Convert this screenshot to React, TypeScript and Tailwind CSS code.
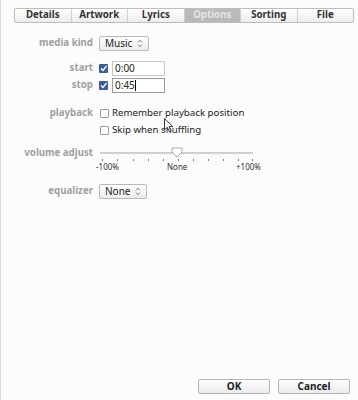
import React from "react";

const tabs = ["Details", "Artwork", "Lyrics", "Options", "Sorting", "File"];

function Label({ children }: { children: React.ReactNode }) {
  return (
    <div className="w-[98px] shrink-0 pr-[6px] text-right font-bold text-[9.7px] text-[#a0a0a0]">
      {children}
    </div>
  );
}

function Check({ checked }: { checked?: boolean }) {
  if (checked) {
    return (
      <div className="w-[9px] h-[9px] bg-[#3b5c9c] rounded-[1px] flex items-center justify-center">
        <svg width="7" height="7" viewBox="0 0 7 7">
          <path d="M1 3.5 L3 5.5 L6.5 1" stroke="white" strokeWidth="1.4" fill="none" />
        </svg>
      </div>
    );
  }
  return <div className="w-[9px] h-[9px] border border-[#9c9c9c] bg-white rounded-[1px]" />;
}

function Popup({ value, w }: { value: string; w: string }) {
  return (
    <div
      className={`${w} h-[15px] border border-[#b8b8b8] rounded-[2px] bg-gradient-to-b from-white to-[#ececec] flex items-center justify-between pl-[5px] pr-[5px] text-[10px] text-[#222]`}
    >
      <span>{value}</span>
      <svg width="6" height="9" viewBox="0 0 6 9">
        <path d="M1 3.5 L3 1.2 L5 3.5 M1 5.5 L3 7.8 L5 5.5" stroke="#777" strokeWidth="0.9" fill="none" />
      </svg>
    </div>
  );
}

export default function App() {
  const ticks = [102, 117, 133, 148, 163, 178, 193, 208, 223, 238, 252];
  return (
    <div
      className="relative w-[358px] h-[400px] bg-[#fcfcfc] border-l border-[#d8d8d8] overflow-hidden"
      style={{ fontFamily: '"Noto Sans", "DejaVu Sans", sans-serif' }}
    >
      <div className="ml-[13px] mt-[8px] w-[340px] h-[15px] flex border border-[#bdbdbd] rounded-[2px] bg-gradient-to-b from-white to-[#ececec]">
        {tabs.map((t, i) => (
          <div
            key={t}
            className={`flex-1 flex items-center justify-center text-[9.7px] font-bold ${
              i > 0 ? "border-l border-[#cfcfcf]" : ""
            } ${t === "Options" ? "bg-[#b9b9b9] text-[#e4e4e4]" : "text-[#333]"}`}
          >
            {t}
          </div>
        ))}
      </div>

      <div className="flex flex-col">
        <div className="mt-[13px] h-[15px] flex items-center">
          <Label>media kind</Label>
          <Popup value="Music" w="w-[50px]" />
        </div>

        <div className="mt-[10px] h-[15px] flex items-center">
          <Label>start</Label>
          <Check checked />
          <div className="ml-[4px] w-[53px] h-[15px] border border-[#c8c8c8] bg-white text-[10px] text-[#222] pl-[2px] leading-[13px]">
            0:00
          </div>
        </div>
        <div className="mt-[2px] h-[15px] flex items-center">
          <Label>stop</Label>
          <Check checked />
          <div className="ml-[4px] w-[53px] h-[15px] border border-[#9a9a9a] bg-white text-[10px] text-[#222] pl-[2px] leading-[13px] flex items-center">
            0:45<span className="w-px h-[11px] bg-black" />
          </div>
        </div>

        <div className="mt-[13px] h-[15px] flex items-center">
          <Label>playback</Label>
          <div className="ml-px">
            <Check />
          </div>
          <span className="ml-[3px] text-[9.7px] text-[#222]">Remember playback position</span>
        </div>
        <div className="mt-[2px] h-[15px] flex items-center">
          <div className="w-[98px]" />
          <div className="ml-px">
            <Check />
          </div>
          <span className="ml-[3px] text-[9.7px] text-[#222]">Skip when shuffling</span>
        </div>

        <div className="mt-[8px] flex items-start">
          <Label>volume adjust</Label>
          <div className="relative w-[170px] h-[24px]">
            <div className="absolute left-[1px] w-[153px] top-[6px] h-[2px] bg-[#cfcfcf]" />
            {ticks.map((x) => (
              <div key={x} className="absolute top-[13px] w-px h-[2px] bg-[#777]" style={{ left: x - 99 }} />
            ))}
            <svg className="absolute left-[72px] top-[1px]" width="12" height="11" viewBox="0 0 12 11">
              <path d="M1 1 H11 V5 L6 10 L1 5 Z" fill="white" stroke="#a8a8a8" strokeWidth="1" />
            </svg>
            <span className="absolute left-[-3px] top-[15px] text-[8px] text-[#333]">-100%</span>
            <span className="absolute left-[68px] top-[15px] text-[8px] text-[#333]">None</span>
            <span className="absolute left-[137px] top-[15px] text-[8px] text-[#333]">+100%</span>
          </div>
        </div>

        <div className="mt-[14px] h-[15px] flex items-center">
          <Label>equalizer</Label>
          <Popup value="None" w="w-[48px]" />
        </div>
      </div>

      <div className="absolute left-[197px] top-[379px] flex gap-[8px]">
        <div className="w-[72px] h-[15px] border border-[#b5b5b5] rounded-[2px] bg-gradient-to-b from-white to-[#ebebeb] flex items-center justify-center text-[10px] font-bold text-[#222]">
          OK
        </div>
        <div className="w-[72px] h-[15px] border border-[#b5b5b5] rounded-[2px] bg-gradient-to-b from-white to-[#ebebeb] flex items-center justify-center text-[10px] font-bold text-[#222]">
          Cancel
        </div>
      </div>

      <svg className="absolute left-[163px] top-[118px]" width="10" height="15" viewBox="0 0 10 15">
        <path d="M0.5 0.5 V12 L3.3 9.3 L5.5 14 L7.2 13.2 L5 8.6 H8.8 Z" fill="white" stroke="#222" strokeWidth="0.9" />
      </svg>
    </div>
  );
}
